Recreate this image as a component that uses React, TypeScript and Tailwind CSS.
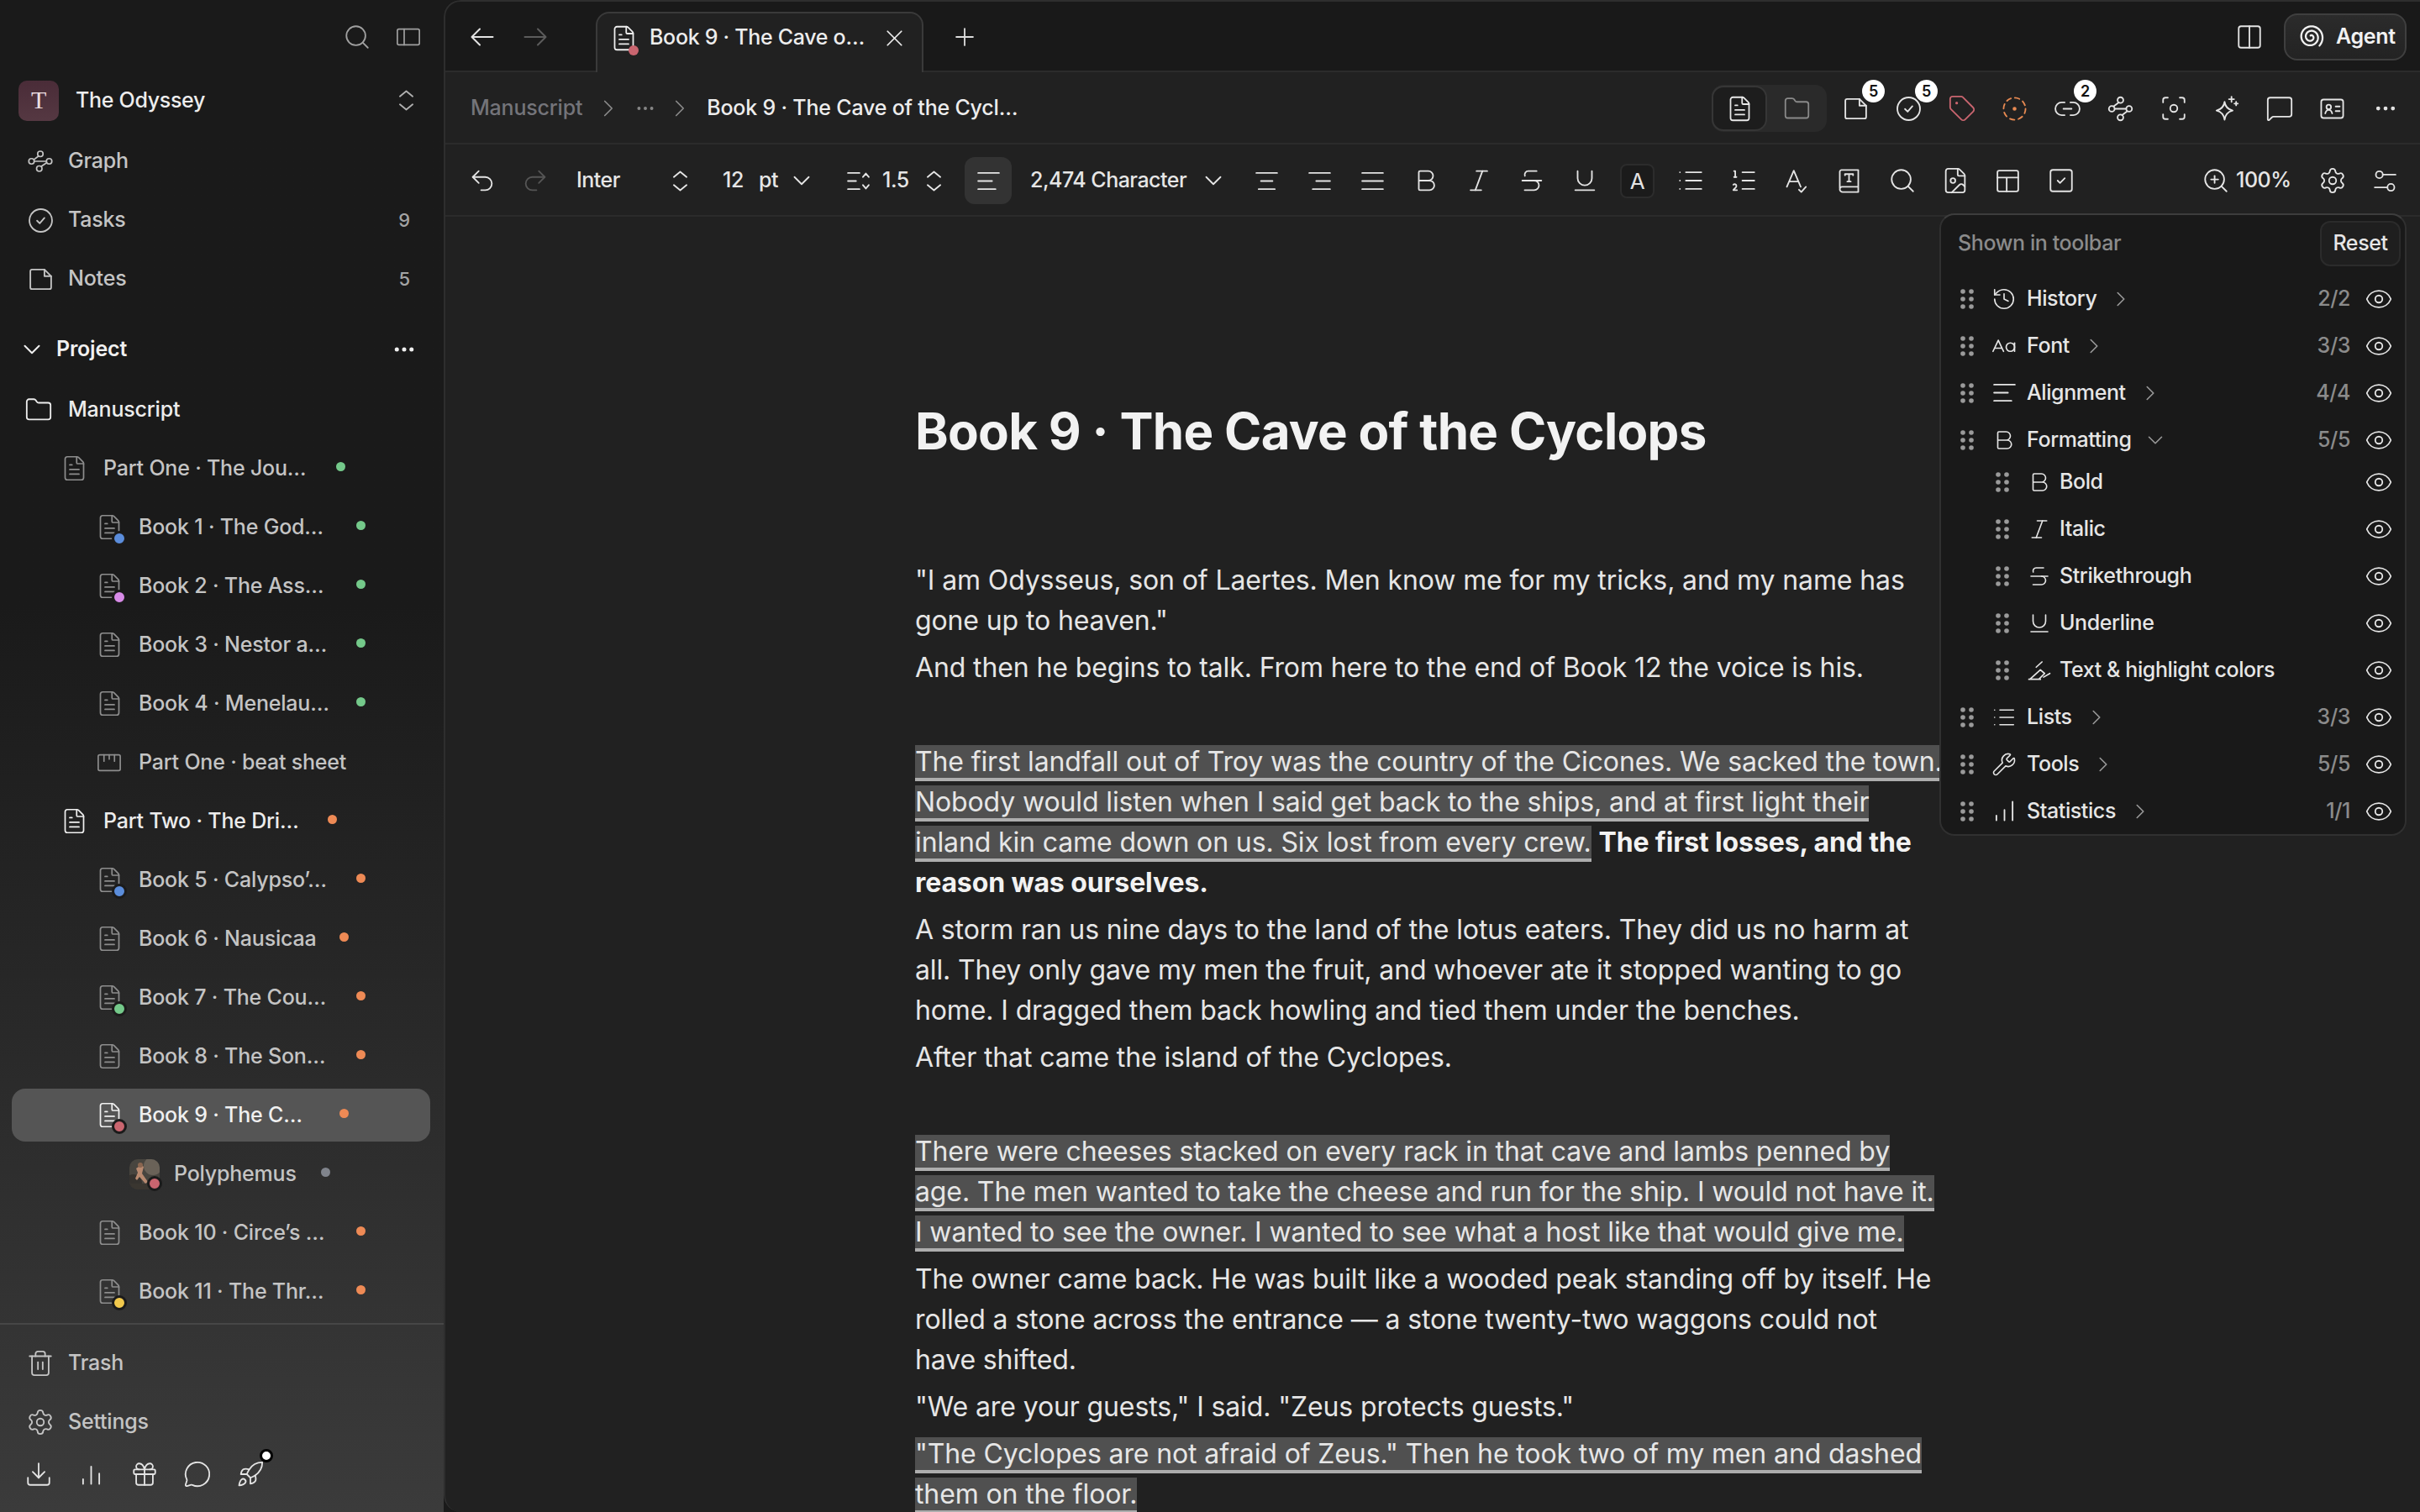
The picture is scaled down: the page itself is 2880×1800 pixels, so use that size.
import React from "react";
import {
  X, Plus, Search, ChevronDown, ChevronRight, Ellipsis, Folder, FileText, Tag,
  MessageSquare, Undo2, Redo2, Bold, Italic, Strikethrough, Underline, List, ListOrdered, Settings, ZoomIn, Trash2,
  Download, Gift, MessageCircle, Rocket, Eye, History, Wrench, FileImage, SquareCheck, Columns2, Focus,
} from "lucide-react";

type SP = { className?: string; children?: React.ReactNode; s?: number };
const Svg = ({ className = "", children, s = 33 }: SP) => (
  <svg width={s} height={s} viewBox="0 0 24 24" fill="none" stroke="currentColor" strokeWidth={1.35} strokeLinecap="round" strokeLinejoin="round" className={`flex-none ${s === 33 ? "-mx-[2.5px]" : ""} ${className}`}>
    {children}
  </svg>
);
const ic = { size: 34, strokeWidth: 1.3, className: "-mx-[3px] flex-none" };

const Arrow = ({ flip }: { flip?: boolean }) => (
  <svg width="28" height="24" viewBox="0 0 28 24" fill="none" stroke="currentColor" strokeWidth={2} strokeLinecap="round" strokeLinejoin="round" className={flip ? "rotate-180" : ""}>
    <path d="M26.500 12H2M11 2.500 1.500 12 11 21.500" />
  </svg>
);
const UpDown = ({ className }: SP) => (
  <Svg className={className}><path d="M6.500 8.500 12 4l5.500 4.500" /><path d="M6.500 15.500 12 20l5.500-4.500" /></Svg>
);
const PanelIcon = () => (
  <Svg s={30}><rect x="1.500" y="4.500" width="21" height="15" rx="1.500" /><path d="M8 4.500v15" /></Svg>
);
const GraphIcon = () => (
  <Svg s={30}><circle cx="12" cy="5" r="2.600" /><circle cx="3.600" cy="12" r="2.600" /><circle cx="20.400" cy="12" r="2.600" /><circle cx="11" cy="19" r="2.600" /><path d="M6.200 12h11.600M10.400 7 6 10.300M13 16.800l5-3.400" /></Svg>
);
const CheckCircle = () => (
  <Svg><circle cx="12" cy="12" r="9.800" /><path d="m8.800 12.200 2.300 2.300 4.100-4.700" /></Svg>
);
const NotesIcon = () => (
  <Svg><path d="M4.500 3.500h10.700L21 9.300v9.700a1.500 1.500 0 0 1-1.500 1.500h-15A1.500 1.500 0 0 1 3 19V5a1.500 1.500 0 0 1 1.500-1.500Z" /><path d="M15.200 3.500v5.800H21" /></Svg>
);
const BeatIcon = () => (
  <Svg s={30}><rect x="1.500" y="4.500" width="21" height="15" rx="1.500" /><path d="M7 4.500v6M12 4.500v4M17 4.500v6" /></Svg>
);
const Bars = ({ a = 1 }: { a?: number }) => (
  <Svg>{a === 1 ? <path d="M5 20v-4M12 20V5M19 20v-9" /> : <path d="M5 20v-4M12 20v-9M19 20V4" />}</Svg>
);
const spiralPath = Array.from({ length: 121 }, (_, i) => {
  const t = i / 120;
  const a = Math.PI / 4 - (1 - t) * 2.4 * 2 * Math.PI;
  const r = 1.3 + 9.700 * t;
  return `${i === 0 ? "M" : "L"}${(12 + r * Math.cos(a)).toFixed(2)} ${(12 + r * Math.sin(a)).toFixed(2)}`;
}).join(" ");
const AgentIcon = () => (
  <Svg s={32}><path d={spiralPath} strokeWidth={1.7} /></Svg>
);
const DashedCircle = () => (
  <Svg className="text-[#e88a52]">
    <circle cx="12" cy="12" r="9.500" strokeDasharray="4 3.460" />
    <circle cx="12" cy="12" r="1" fill="currentColor" />
  </Svg>
);
const LinkIcon = () => (
  <Svg><path d="M9.500 6.500H7a5.500 5.500 0 0 0 0 11h2.500M14.500 6.500H17a5.500 5.500 0 0 1 0 11h-2.500M8.500 12h7" /></Svg>
);
const ShareIcon = () => (
  <Svg><circle cx="12" cy="4.500" r="2.500" /><circle cx="12" cy="19.500" r="2.500" /><circle cx="4.500" cy="12" r="2.500" /><circle cx="19.500" cy="12" r="2.500" /><path d="M7 12h10M10.500 6.500 6 10M13.500 17.500 18 14" /></Svg>
);
const SparkleIcon = () => (
  <Svg><path d="M10.500 6c.6 4.200 2.800 6.500 7 7.500-4.200 1-6.400 3.300-7 8-.6-4.700-2.800-7-7-8 4.200-1 6.400-3.300 7-7.500Z" /><path d="M16.500 1.500v4.500M14.300 3.700h4.400M20.500 6v3M19 7.500h3" /></Svg>
);
const IdIcon = () => (
  <Svg><rect x="2.500" y="4" width="19" height="16" rx="2" /><circle cx="9" cy="10.500" r="2" /><path d="M6 16c.5-2 1.500-3 3-3s2.500 1 3 3M15 10h3.500M15 14h3.500" /></Svg>
);
const LineHeightIcon = () => (
  <Svg><path d="M3 5h10M3 12h7M3 19h10M16 8.500l2.500-3 2.500 3M16 15.500l2.500 3 2.500-3" /></Svg>
);
const AlignIcon = ({ v }: { v: "left" | "center" | "right" | "justify" }) => (
  <Svg>
    {v === "left" && <path d="M3 5h18M3 12h12M3 19h15" />}
    {v === "center" && <path d="M3 5h18M7 12h10M5 19h14" />}
    {v === "right" && <path d="M3 5h18M9 12h12M6 19h15" />}
    {v === "justify" && <path d="M3 5h18M3 12h18M3 19h18" />}
  </Svg>
);
const SpellIcon = () => (
  <Svg><path d="M4 17 10 3l6 14M6 12.500h8M14.500 19.500l2 2 4-4.500" /></Svg>
);
const BookT = () => (
  <Svg><path d="M4 18V4a1.500 1.500 0 0 1 1.500-1.500H20V21.500H6.500A2.500 2.500 0 0 1 4 19a2 2 0 0 1 2-2h14" /><path d="M8.500 7V6h7v1M12 6v6.500M10.500 12.500h3" /></Svg>
);
const TableIcon = () => (
  <Svg><rect x="3" y="3" width="18" height="18" rx="1.500" /><path d="M3 9h18M11 9v12" /></Svg>
);
const SlidersIcon = () => (
  <Svg><circle cx="7" cy="6.500" r="3" /><path d="M10 6.500h11M3 17.500h11" /><circle cx="17" cy="17.500" r="3" /></Svg>
);
const SmallCaseIcon = () => (
  <Svg s={30}><path d="M1.500 17 6.500 6.500l5 10.500M3 14h7" /><circle cx="18" cy="13" r="4" /><path d="M22 9v8" /></Svg>
);
const HighlightIcon = () => (
  <Svg s={30}><path d="M2 20.500h11M3 20.500l10-9 4 3.500-5.500 5.500M9 9l5.500-5M16 18.500l6-3.500" /></Svg>
);
const Grip = () => (
  <svg width="20" height="26" viewBox="0 0 20 26" fill="#9a9a9a" className="flex-none">
    <circle cx="5" cy="4" r="2.800" /><circle cx="15" cy="4" r="2.800" />
    <circle cx="5" cy="13" r="2.800" /><circle cx="15" cy="13" r="2.800" />
    <circle cx="5" cy="22" r="2.800" /><circle cx="15" cy="22" r="2.800" />
  </svg>
);

const Slot = ({ children, c = "text-[#e4e4e4]" }: { children?: React.ReactNode; c?: string }) => (
  <div className={`relative flex h-[56px] w-[63px] flex-none items-center justify-center ${c}`}>{children}</div>
);

const Badge = ({ n }: { n: string }) => (
  <span className="absolute right-[-3px] top-[-6px] flex h-[27px] w-[27px] items-center justify-center rounded-full bg-white text-[18px] font-semibold text-[#111]">{n}</span>
);

type Tree = { t: string; kind: "doc" | "beat" | "avatar"; pl: string; gap: string; dot?: string; badge?: string; cls: string; sel?: boolean };
const G = "bg-[#74c98a]";
const O = "bg-[#ee8a55]";
const P23 = "pl-[102px]";
const D = "text-[#c4c4c4]";
const tree: Tree[] = [
  { t: "Part One · The Jou…", kind: "doc", pl: "pl-[60px]", gap: "w-[277px]", dot: G, cls: D },
  { t: "Book 1 · The God…", kind: "doc", pl: P23, gap: "w-[259px]", dot: G, badge: "bg-[#5b8ddb]", cls: D },
  { t: "Book 2 · The Ass…", kind: "doc", pl: P23, gap: "w-[259px]", dot: G, badge: "bg-[#d88be8]", cls: D },
  { t: "Book 3 · Nestor a…", kind: "doc", pl: P23, gap: "w-[259px]", dot: G, cls: D },
  { t: "Book 4 · Menelau…", kind: "doc", pl: P23, gap: "w-[259px]", dot: G, cls: D },
  { t: "Part One · beat sheet", kind: "beat", pl: P23, gap: "w-[259px]", cls: D },
  { t: "Part Two · The Dri…", kind: "doc", pl: "pl-[60px]", gap: "w-[267px]", dot: O, cls: "text-[#ececec]" },
  { t: "Book 5 · Calypso’…", kind: "doc", pl: P23, gap: "w-[259px]", dot: O, badge: "bg-[#5b8ddb]", cls: D },
  { t: "Book 6 · Nausicaa", kind: "doc", pl: P23, gap: "w-[239px]", dot: O, cls: D },
  { t: "Book 7 · The Cou…", kind: "doc", pl: P23, gap: "w-[259px]", dot: O, badge: "bg-[#74c98a]", cls: D },
  { t: "Book 8 · The Son…", kind: "doc", pl: P23, gap: "w-[259px]", dot: O, cls: D },
  { t: "Book 9 · The C…", kind: "doc", pl: P23, gap: "w-[239px]", dot: O, badge: "bg-[#c9656f]", cls: "text-[#f0f0f0]", sel: true },
  { t: "Polyphemus", kind: "avatar", pl: "pl-[140px]", gap: "w-[175px]", dot: "bg-[#80848c]", badge: "bg-[#c9656f]", cls: D },
  { t: "Book 10 · Circe’s …", kind: "doc", pl: P23, gap: "w-[259px]", dot: O, cls: D },
  { t: "Book 11 · The Thr…", kind: "doc", pl: P23, gap: "w-[259px]", dot: O, badge: "bg-[#f2c94c]", cls: D },
];

const TreeRow = ({ r }: { r: Tree }) => (
  <div className="h-[70px] flex-none pl-[14px] pr-[16px] py-[3.5px]">
    <div className={`flex h-[63px] items-center rounded-[16px] pt-[1px] ${r.pl} ${r.sel ? "bg-[#555555]" : ""}`}>
      {r.kind === "avatar" ? (
        <div className="relative mr-[17px] h-[36px] w-[36px] flex-none">
          <svg width="36" height="36" viewBox="0 0 36 36" className="rounded-[10px]">
            <rect width="36" height="36" fill="#48453f" />
            <circle cx="28" cy="8" r="11" fill="#6a6258" />
            <circle cx="5" cy="28" r="10" fill="#35322e" />
            <path d="M8 11l6-4 3 2-2 8 7 10-3 2-7-8-3 4-2-2 3-7Z" fill="#b98a70" />
            <circle cx="13" cy="7" r="3" fill="#8a6650" />
            <rect y="29" width="36" height="7" fill="#3a3630" />
          </svg>
          <span className={`absolute bottom-[-2px] right-[-3px] h-[18px] w-[18px] rounded-full border-[3.5px] border-[#1b1b1b] ${r.badge}`} />
        </div>
      ) : (
        <div className={`relative mr-[21px] w-[28px] flex-none ${r.sel || r.t.startsWith("Part Two") ? "text-[#f0f0f0]" : "text-[#8d8d8d]"}`}>
          {r.kind === "doc" ? <FileText size={33} strokeWidth={1.25} className="-mx-[2.5px]" /> : <div className="-mx-[1px]"><BeatIcon /></div>}
          {r.badge && <span className={`absolute bottom-[-6px] right-[-7px] h-[18px] w-[18px] rounded-full border-[3.5px] border-[#1b1b1b] ${r.badge}`} />}
        </div>
      )}
      <span className={`flex-none whitespace-nowrap font-medium ${r.gap} ${r.cls}`}>{r.t}</span>
      {r.dot && <span className={`mb-[4px] h-[11px] w-[11px] flex-none rounded-full ${r.dot}`} />}
    </div>
  </div>
);

const NavRow = ({ icon, label, count, cls = "text-[#c4c4c4]" }: { icon: React.ReactNode; label: string; count?: string; cls?: string }) => (
  <div className={`flex h-[70px] flex-none items-center pl-[34px] pr-[40px] pt-[2px] font-medium ${cls}`}>
    <div className="flex w-[28px] flex-none justify-center">{icon}</div>
    <span className="ml-[19px]">{label}</span>
    {count && <span className="ml-auto text-[22px] text-[#a4a4a4]">{count}</span>}
  </div>
);

const Sidebar = () => (
  <aside className="flex h-[1800px] w-[528px] flex-none flex-col overflow-hidden bg-gradient-to-b from-[#1a1a1a] from-[40%] to-[#3b3b3b] text-[25px] tracking-[-0.2px]">
    <div className="flex h-[88px] flex-none items-center justify-end pr-[27px] text-[#a0a0a0]">
      <Search {...ic} />
      <div className="ml-[32px]"><PanelIcon /></div>
    </div>
    <div className="flex h-[62px] flex-none items-center pl-[22px] pr-[31px] pt-[1px] tracking-[-0.3px]">
      <div className="flex h-[48px] w-[48px] flex-none items-center justify-center rounded-[10px] bg-gradient-to-b from-[#4a2c38] to-[#553842] pb-[3px] font-['Liberation_Serif',serif] text-[30px] text-[#ecdfe2]">T</div>
      <span className="ml-[20px] pt-[1px] font-medium text-[#ededed]">The Odyssey</span>
      <UpDown className="ml-auto text-[#b0b0b0]" />
    </div>
    <div className="mt-[6px]" />
    <NavRow icon={<GraphIcon />} label="Graph" />
    <NavRow icon={<CheckCircle />} label="Tasks" count="9" />
    <NavRow icon={<NotesIcon />} label="Notes" count="5" />
    <div className="mt-[14px] flex h-[70px] flex-none items-center pl-[24px] pr-[32px] pt-[1px] text-[#f0f0f0]">
      <ChevronDown size={34} strokeWidth={1.4} className="-mx-[3px]" />
      <span className="ml-[15px] font-semibold">Project</span>
      <Ellipsis size={30} strokeWidth={2} className="ml-auto" />
    </div>
    <div className="mt-[2px] flex h-[70px] flex-none items-center pl-[32px] pt-[1px] font-medium text-[#ececec]">
      <Folder {...ic} />
      <span className="ml-[21px]">Manuscript</span>
    </div>
    <div className="min-h-0 flex-1 overflow-hidden">
      {tree.map((r) => <TreeRow key={r.t} r={r} />)}
    </div>
    <div className="h-[225px] flex-none border-t-2 border-[#474747] pt-[10px]">
      <NavRow icon={<Trash2 {...ic} />} label="Trash" />
      <NavRow icon={<Settings {...ic} />} label="Settings" />
      <div className="flex pl-[14px]">
        <Slot><Download {...ic} /></Slot>
        <Slot><Bars /></Slot>
        <Slot><Gift {...ic} /></Slot>
        <Slot><MessageCircle {...ic} /></Slot>
        <Slot>
          <Rocket {...ic} />
          <span className="absolute right-[4px] top-[-2px] h-[16px] w-[16px] rounded-full border-[3px] border-black bg-white" />
        </Slot>
      </div>
    </div>
  </aside>
);

const TabBar = () => (
  <div className="flex h-[86px] flex-none items-end border-b-2 border-[#2b2b2b] bg-[#191919] pl-[14px] text-[25px] tracking-[-0.3px]">
    <div className="flex h-[84px] flex-none items-center pt-[4px]">
      <Slot><Arrow /></Slot>
      <Slot c="text-[#5c5c5c]"><Arrow flip /></Slot>
    </div>
    <div className="relative mb-[-2px] ml-[41px] flex h-[72px] w-[390px] flex-none items-center rounded-t-[16px] border-x-2 border-t-2 border-[#3a3a3a] border-b-transparent bg-[#212121] pb-[12px] pl-[17px] font-medium text-[#ededed]">
      <div className="relative w-[28px] flex-none">
        <FileText size={33} strokeWidth={1.3} className="-mx-[2.5px]" />
        <span className="absolute bottom-[-4px] right-[-4px] h-[12px] w-[12px] rounded-full bg-[#c9656f]" />
      </div>
      <span className="ml-[17px] whitespace-nowrap">Book 9 · The Cave o…</span>
      <X size={33} strokeWidth={1.25} className="ml-auto mr-[16px] flex-none" />
    </div>
    <div className="ml-[22px] flex h-[84px] w-[54px] flex-none items-center justify-center pt-[4px] text-[#dcdcdc]"><Plus size={34} strokeWidth={1.3} /></div>
    <div className="ml-auto flex h-[84px] flex-none items-center pr-[16px] pt-[4px]">
      <Slot><Columns2 {...ic} /></Slot>
      <div className="ml-[10px] flex h-[56px] w-[146px] items-center rounded-[16px] border-2 border-[#3f3f3f] bg-gradient-to-b from-[#2b2b2b] to-[#232323] pl-[14px] font-semibold text-[#f2f2f2]">
        <AgentIcon />
        <span className="ml-[14px]">Agent</span>
      </div>
    </div>
  </div>
);

const Crumb = ({ cls }: { cls: string }) => <ChevronRight size={34} strokeWidth={1.2} className={`-mx-[4px] flex-none text-[#8a8a8a] ${cls}`} />;

const Breadcrumb = () => (
  <div className="flex h-[86px] flex-none items-center border-b-2 border-[#2b2b2b] pl-[32px] pr-[10px] pt-[2px] text-[25px] font-medium tracking-[-0.2px]">
    <span className="text-[#74747a]">Manuscript</span>
    <Crumb cls="ml-[14px]" />
    <Ellipsis size={26} strokeWidth={1.6} className="ml-[18px] flex-none text-[#8a8a8a]" />
    <Crumb cls="ml-[11px]" />
    <span className="ml-[19px] text-[#ededed]">Book 9 · The Cave of the Cycl…</span>
    <div className="ml-auto flex h-[56px] w-[137px] flex-none items-center rounded-[14px] bg-[#2a2a2a]">
      <div className="flex h-[54px] w-[66px] items-center justify-center rounded-[14px] border-2 border-[#363636] bg-[#1d1d1d] text-[#e8e8e8]"><FileText size={33} strokeWidth={1.3} /></div>
      <div className="flex flex-1 items-center justify-center text-[#8a8a8a]"><Folder size={33} strokeWidth={1.3} /></div>
    </div>
    <div className="ml-[3px] flex">
      <Slot><NotesIcon /><Badge n="5" /></Slot>
      <Slot><CheckCircle /><Badge n="5" /></Slot>
      <Slot c="text-[#c9656f]"><Tag {...ic} /></Slot>
      <Slot><DashedCircle /></Slot>
      <Slot><LinkIcon /><Badge n="2" /></Slot>
      <Slot><ShareIcon /></Slot>
      <Slot><Focus {...ic} /></Slot>
      <Slot><SparkleIcon /></Slot>
      <Slot><MessageSquare {...ic} /></Slot>
      <Slot><IdIcon /></Slot>
      <Slot><Ellipsis size={30} strokeWidth={1.8} /></Slot>
    </div>
  </div>
);

const Toolbar = () => (
  <div className="flex h-[86px] flex-none items-center border-b-2 border-[#2b2b2b] pl-[14px] pt-[2px] text-[25px] font-medium tracking-[-0.5px] text-[#e6e6e6]">
    <Slot><Undo2 {...ic} /></Slot>
    <Slot c="text-[#555555]"><Redo2 {...ic} /></Slot>
    <span className="ml-[18px] w-[109px] flex-none">Inter</span>
    <UpDown />
    <span className="ml-[37px] w-[43px] flex-none">12</span>
    <span className="w-[37px] flex-none">pt</span>
    <ChevronDown {...ic} />
    <div className="ml-[39px] w-[28px] flex-none"><LineHeightIcon /></div>
    <span className="ml-[15px] w-[47px] flex-none">1.5</span>
    <UpDown />
    <div className="ml-[23px] flex h-[56px] w-[56px] flex-none items-center justify-center rounded-[12px] bg-[#333333]"><AlignIcon v="left" /></div>
    <span className="ml-[22px] w-[204px] flex-none whitespace-nowrap">2,474 Character</span>
    <ChevronDown {...ic} />
    <div className="ml-[18px] flex">
      <Slot><AlignIcon v="center" /></Slot>
      <Slot><AlignIcon v="right" /></Slot>
      <Slot><AlignIcon v="justify" /></Slot>
      <Slot><Bold {...ic} /></Slot>
      <Slot><Italic {...ic} /></Slot>
      <Slot><Strikethrough {...ic} /></Slot>
      <Slot><Underline {...ic} /></Slot>
      <Slot><span className="flex h-[41px] w-[41px] items-center justify-center rounded-[8px] border-2 border-[#2c2c2c] bg-[#1b1b1b] text-[26px] font-normal">A</span></Slot>
      <Slot><List {...ic} /></Slot>
      <Slot><ListOrdered {...ic} /></Slot>
      <Slot><SpellIcon /></Slot>
      <Slot><BookT /></Slot>
      <Slot><Search {...ic} /></Slot>
      <Slot><FileImage {...ic} /></Slot>
      <Slot><TableIcon /></Slot>
      <Slot><SquareCheck {...ic} /></Slot>
    </div>
    <div className="ml-[139px] w-[28px] flex-none"><ZoomIn {...ic} /></div>
    <span className="ml-[10px] w-[71px] flex-none">100%</span>
    <div className="ml-[12px] flex">
      <Slot><Settings {...ic} /></Slot>
      <Slot><SlidersIcon /></Slot>
    </div>
  </div>
);

const Mark = ({ children }: SP) => (
  <span className="border-b-4 border-[#adadad] bg-[#505050] [box-decoration-break:clone]">{children}</span>
);
const Para = ({ children }: SP) => <p className="mb-[8px] min-h-[48px]">{children}</p>;

const Doc = () => (
  <div className="min-h-0 flex-1 overflow-hidden pl-[561px]">
    <div className="w-[1223px] pt-[219px] text-[32px] leading-[48px] tracking-[-0.12px] text-[#e6e6e6]">
      <h1 className="mb-[118px] whitespace-nowrap text-[60px] font-bold leading-[72px] tracking-[-0.7px] text-[#f2f2f2]">Book 9 · The Cave of the Cyclops</h1>
      <Para>"I am Odysseus, son of Laertes. Men know me for my tricks, and my name has gone up to heaven."</Para>
      <Para>And then he begins to talk. From here to the end of Book 12 the voice is his.</Para>
      <Para />
      <Para>
        <Mark>The first landfall out of Troy was the country of the Cicones. We sacked the town. Nobody would listen when I said get back to the ships, and at first light their inland kin came down on us. Six lost from every crew.</Mark>{" "}
        <b className="font-bold text-[#f2f2f2]">The first losses, and the reason was ourselves.</b>
      </Para>
      <Para>A storm ran us nine days to the land of the lotus eaters. They did us no harm at all. They only gave my men the fruit, and whoever ate it stopped wanting to go home. I dragged them back howling and tied them under the benches.</Para>
      <Para>After that came the island of the Cyclopes.</Para>
      <Para />
      <Para><Mark>There were cheeses stacked on every rack in that cave and lambs penned by age. The men wanted to take the cheese and run for the ship. I would not have it. I wanted to see the owner. I wanted to see what a host like that would give me.</Mark></Para>
      <Para>The owner came back. He was built like a wooded peak standing off by itself. He rolled a stone across the entrance — a stone twenty-two waggons could not have shifted.</Para>
      <Para>"We are your guests," I said. "Zeus protects guests."</Para>
      <Para><Mark>"The Cyclopes are not afraid of Zeus." Then he took two of my men and dashed them on the floor.</Mark></Para>
    </div>
  </div>
);

const PopRow = ({ icon, label, count, sub, open }: { icon?: React.ReactNode; label: string; count?: string; sub?: boolean; open?: boolean }) => (
  <div className={`flex h-[56px] items-center pr-[16px] pt-[1px] font-medium text-[#e6e6e6] ${sub ? "pl-[63px]" : "pl-[21px]"}`}>
    <Grip />
    <div className="ml-[19px] flex w-[30px] flex-none justify-center">{icon}</div>
    <span className={`whitespace-nowrap ${sub ? "ml-[9px]" : "ml-[12px]"}`}>{label}</span>
    {!sub && (open ? <ChevronDown size={30} strokeWidth={1.3} className="ml-[14px] flex-none text-[#999]" /> : <ChevronRight size={30} strokeWidth={1.3} className="ml-[14px] flex-none text-[#999]" />)}
    {count && <span className="ml-auto text-[#8b8b8b]">{count}</span>}
    <Eye size={34} strokeWidth={1.3} className={`-mx-[2px] flex-none ${count ? "ml-[17px]" : "ml-auto"}`} />
  </div>
);

const Popover = () => (
  <div className="absolute left-[1780px] top-[254px] h-[741px] w-[556px] rounded-[18px] border-2 border-[#303030] border-t-[#3d3d3d] bg-[#191919] text-[25px] tracking-[-0.4px]">
    <div className="flex h-[71px] items-center pb-[3px] pl-[20px] pr-[5px]">
      <span className="font-medium text-[#8b8b8b]">Shown in toolbar</span>
      <span className="ml-auto flex h-[54px] w-[96px] items-center justify-center rounded-[12px] border-2 border-[#2b2b2b] bg-[#1f1f1f] font-medium text-[#e6e6e6]">Reset</span>
    </div>
    <PopRow icon={<History size={34} strokeWidth={1.3} />} label="History" count="2/2" />
    <PopRow icon={<SmallCaseIcon />} label="Font" count="3/3" />
    <PopRow icon={<AlignIcon v="left" />} label="Alignment" count="4/4" />
    <PopRow icon={<Bold size={34} strokeWidth={1.3} />} label="Formatting" count="5/5" open />
    <div className="mt-[-6px]">
      <PopRow sub icon={<Bold size={34} strokeWidth={1.3} />} label="Bold" />
      <PopRow sub icon={<Italic size={34} strokeWidth={1.3} />} label="Italic" />
      <PopRow sub icon={<Strikethrough size={34} strokeWidth={1.3} />} label="Strikethrough" />
      <PopRow sub icon={<Underline size={34} strokeWidth={1.3} />} label="Underline" />
      <PopRow sub icon={<HighlightIcon />} label="Text & highlight colors" />
    </div>
    <PopRow icon={<List size={34} strokeWidth={1.3} />} label="Lists" count="3/3" />
    <PopRow icon={<Wrench size={34} strokeWidth={1.3} />} label="Tools" count="5/5" />
    <PopRow icon={<Bars a={2} />} label="Statistics" count="1/1" />
  </div>
);

export default function App() {
  return (
    <div className="flex h-[1800px] w-[2880px] overflow-hidden bg-[#1a1a1a] font-['Inter',sans-serif] leading-normal">
      <Sidebar />
      <main className="relative flex h-[1800px] flex-1 flex-col overflow-hidden rounded-l-[20px] bg-[#212121]">
        <TabBar />
        <Breadcrumb />
        <Toolbar />
        <Doc />
        <Popover />
        <div className="pointer-events-none absolute inset-0 rounded-l-[20px] border-l-2 border-t-2 border-[#2e2e2e]" />
      </main>
    </div>
  );
}
